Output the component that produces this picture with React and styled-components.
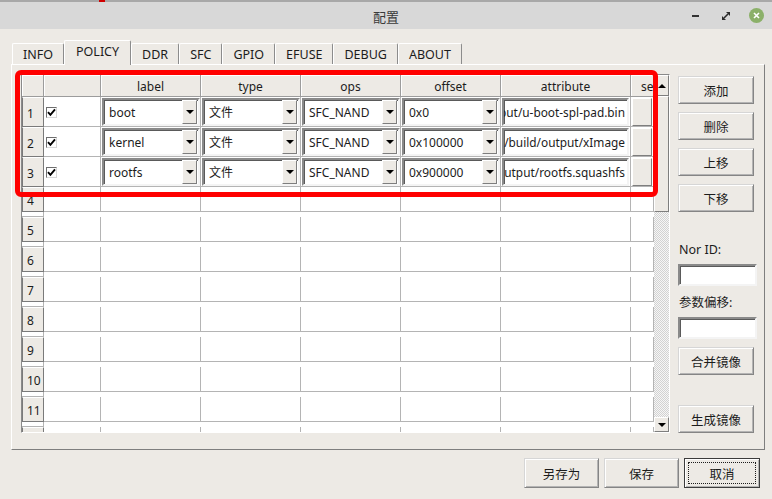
import React from 'react';
import styled, { createGlobalStyle, css } from 'styled-components';

const GlobalStyle = createGlobalStyle`
  html, body { margin: 0; padding: 0; }
  body {
    background: #edeae5;
    font-family: "Noto Sans", "Noto Sans CJK SC", sans-serif;
    font-size: 12px;
    color: #1c1c1c;
  }
  * { box-sizing: border-box; }
`;

const BG = '#edeae5';
const DARK = '#8c8c8c';
const GRID = '#b4b4b4';

const Window = styled.div`
  position: relative;
  width: 772px;
  height: 499px;
  display: flex;
  flex-direction: column;
  background: ${BG};
  overflow: hidden;
`;

const TopStrip = styled.div`
  height: 2px;
  background: linear-gradient(90deg, #a8a8a8 0 99px, #d00000 99px 105px, #a8a8a8 105px 100%);
`;

const TitleBar = styled.div`
  height: 27px;
  background: #d8d8d8;
  display: grid;
  grid-template-columns: 1fr auto 1fr;
  align-items: center;
`;

const Title = styled.div`
  grid-column: 2;
  font-size: 13px;
  color: #3a3a3a;
  padding-top: 1px;
`;

const Controls = styled.div`
  grid-column: 3;
  justify-self: end;
  display: flex;
  align-items: center;
  padding-right: 8px;
`;

const MinIcon = styled.span`
  width: 7px;
  height: 2px;
  background: #333;
  margin-right: 23px;
`;

const RestoreIcon = styled.svg`
  width: 8px;
  height: 8px;
  margin-right: 19px;
`;

const CloseIcon = styled.span`
  width: 15px;
  height: 15px;
  border-radius: 50%;
  background: #8bb069;
  display: flex;
  align-items: center;
  justify-content: center;
`;

const Body = styled.div`
  flex: 1;
  display: flex;
  flex-direction: column;
  padding-top: 11px;
`;

const TabBar = styled.div`
  display: flex;
  align-items: flex-end;
  height: 24px;
  padding-left: 12px;
  position: relative;
  z-index: 2;
`;

const Tab = styled.div`
  height: ${p => (p.$active ? 25 : 21)}px;
  padding: 0 ${p => (p.$active ? 11 : 10)}px;
  margin-bottom: ${p => (p.$active ? -1 : 0)}px;
  display: flex;
  align-items: center;
  justify-content: center;
  background: ${BG};
  border-top: 1px solid #ffffff;
  border-left: 1px solid #ffffff;
  border-right: 1px solid ${DARK};
  border-top-left-radius: 2px;
  border-top-right-radius: 2px;
  font-size: 12.5px;
  color: #1c1c1c;
  ${p => p.$active ? css`padding-bottom: 3px;` : css`padding-top: 1px;`}
`;

const Panel = styled.div`
  margin-left: 11px;
  width: 754px;
  height: 386px;
  border-top: 1px solid #ffffff;
  border-left: 1px solid #ffffff;
  border-right: 1px solid #7e7e7e;
  border-bottom: 1px solid #7e7e7e;
  padding: 9px 0 0 9px;
  display: flex;
  gap: 8px;
`;

const TableFrame = styled.div`
  width: 649px;
  height: 359px;
  border-top: 1px solid #8a8a8a;
  border-left: 1px solid #8a8a8a;
  border-right: 1px solid #ffffff;
  border-bottom: 1px solid #ffffff;
  display: flex;
  background: #ffffff;
`;

const Grid = styled.div`
  width: 632px;
  overflow: hidden;
  display: flex;
  flex-direction: column;
`;

const COLS = '22px 57px 100px 100px 100px 100px 130px 23px';

const Row = styled.div`
  display: grid;
  grid-template-columns: ${COLS};
  height: ${p => (p.$header ? 22 : 30)}px;
  flex-shrink: 0;
`;

const HeadCell = styled.div`
  background: ${BG};
  border-right: 1px solid #9c9c9c;
  border-bottom: 1px solid #9c9c9c;
  box-shadow: inset 1px 1px #ffffff;
  display: flex;
  align-items: center;
  justify-content: ${p => (p.$start ? 'flex-start' : 'center')};
  padding: 2px 0 0 ${p => (p.$start ? 10 : 0)}px;
  white-space: nowrap;
  overflow: hidden;
  color: #1c1c1c;
`;

const RowHead = styled.div`
  background: ${BG};
  border-left: 1px solid #7a7a7a;
  border-right: 1px solid #7a7a7a;
  border-bottom: 1px solid #7a7a7a;
  border-top: 1px solid #ffffff;
  display: flex;
  align-items: center;
  padding-left: 4px;
  padding-top: 2px;
  font-size: 12px;
`;

const Cell = styled.div`
  border-right: 1px solid ${GRID};
  border-bottom: 1px solid ${GRID};
  padding: 1px 0 0 1px;
  display: flex;
  align-items: stretch;
  min-width: 0;
  background: #ffffff;
`;

const CheckCell = styled(Cell)`
  align-items: center;
  padding: 0 0 0 2px;
`;

const CheckBox = styled.span`
  width: 11px;
  height: 11px;
  background: #ffffff;
  border: 1px solid;
  border-color: #6e6e6e #d8d8d8 #d8d8d8 #6e6e6e;
  display: flex;
  align-items: center;
  justify-content: center;
  margin-top: 1px;
`;

const sunken = css`
  border: 2px solid;
  border-color: #8a8a8a #f4f4f4 #f4f4f4 #8a8a8a;
  box-shadow: inset 1px 1px #5a5a5a;
  background: #ffffff;
`;

const Combo = styled.div`
  ${sunken};
  flex: 1;
  display: flex;
  align-items: center;
  min-width: 0;
`;

const ComboText = styled.span`
  flex: 1;
  min-width: 0;
  padding-left: 5px;
  white-space: nowrap;
  overflow: hidden;
  font-size: 12px;
`;

const raised = css`
  background: ${BG};
  border: 1px solid;
  border-color: #ffffff #7e7e7e #7e7e7e #ffffff;
`;

const DropBtn = styled.span`
  ${raised};
  width: 15px;
  flex-shrink: 0;
  align-self: stretch;
  margin: 0 1px 0 0;
  display: flex;
  align-items: center;
  justify-content: center;
`;

const Triangle = styled.span`
  width: 0;
  height: 0;
  border-left: 4px solid transparent;
  border-right: 4px solid transparent;
  border-${p => (p.$up ? 'bottom' : 'top')}: 4px solid #000000;
`;

const Entry = styled.div`
  ${sunken};
  flex: 1;
  display: flex;
  align-items: center;
  justify-content: flex-end;
  overflow: hidden;
  white-space: nowrap;
  padding-right: 2px;
  font-size: 11.85px;
  margin-right: 1px;
`;

const SideCell = styled(Cell)`
  padding: 1px 1px 0 1px;
`;

const SideBox = styled.span`
  ${raised};
  flex: 1;
`;

const Scrollbar = styled.div`
  width: 15px;
  display: flex;
  flex-direction: column;
  background: repeating-conic-gradient(#d2d2d2 0 25%, #f6f6f6 0 50%) 0 0 / 2px 2px;
`;

const ScrollBtn = styled.div`
  ${raised};
  height: ${p => p.$h}px;
  display: flex;
  align-items: center;
  justify-content: center;
  flex-shrink: 0;
`;

const Thumb = styled.div`
  ${raised};
  height: 116px;
  flex-shrink: 0;
`;

const Track = styled.div`
  flex: 1;
`;

const Side = styled.div`
  width: 79px;
  height: 359px;
  display: flex;
  flex-direction: column;
  align-items: flex-start;
`;

const Button = styled.button`
  font-family: inherit;
  font-size: 12.5px;
  color: #1c1c1c;
  width: ${p => p.$w || 76}px;
  height: ${p => p.$h || 28}px;
  margin-top: ${p => (p.$auto ? 'auto' : `${p.$mt || 0}px`)};
  background: ${BG};
  border: 1px solid;
  border-color: #d6d6d6 #858585 #858585 #d6d6d6;
  box-shadow: inset 1px 1px #ffffff, inset -1px -1px #b4b4b4;
  padding: 0;
  display: flex;
  align-items: center;
  justify-content: center;
  flex-shrink: 0;
  ${p => p.$focus && css`
    border-color: #3c3c3c;
    outline: 1px dotted #1c1c1c;
    outline-offset: -5px;
  `}
`;

const Label = styled.div`
  margin-top: ${p => p.$mt}px;
  height: 18px;
  line-height: 18px;
  font-size: 12.5px;
  padding-left: 1px;
`;

const Input = styled.div`
  ${sunken};
  width: 79px;
  height: 22px;
  margin-top: 5px;
`;

const Footer = styled.div`
  display: flex;
  justify-content: flex-end;
  gap: 5px;
  padding: 8px 12px 0 0;
`;

const Highlight = styled.div`
  position: absolute;
  left: 15px;
  top: 70px;
  width: 643px;
  height: 127px;
  border: 5px solid #ff0000;
  border-radius: 6px;
  pointer-events: none;
`;

const CheckMark = () => (
  <svg width="9" height="9" viewBox="0 0 9 9">
    <path d="M1 4.2 L3.4 6.8 L8 1.4" fill="none" stroke="#000" strokeWidth="1.9" />
  </svg>
);

const rows = [
  { label: 'boot', type: '文件', ops: 'SFC_NAND', offset: '0x0', attr: '/home/user/sdk/output/u-boot-spl-pad.bin' },
  { label: 'kernel', type: '文件', ops: 'SFC_NAND', offset: '0x100000', attr: '/home/user/sdk/build/output/xImage' },
  { label: 'rootfs', type: '文件', ops: 'SFC_NAND', offset: '0x900000', attr: '/home/user/sdk/output/rootfs.squashfs' },
];

const tabs = ['INFO', 'POLICY', 'DDR', 'SFC', 'GPIO', 'EFUSE', 'DEBUG', 'ABOUT'];
const headers = ['', '', 'label', 'type', 'ops', 'offset', 'attribute'];

const ComboBox = ({ value }) => (
  <Cell>
    <Combo>
      <ComboText>{value}</ComboText>
      <DropBtn><Triangle /></DropBtn>
    </Combo>
  </Cell>
);

export default function App() {
  const empty = Array.from({ length: 9 }, (_, i) => i + 4);
  return (
    <>
      <GlobalStyle />
      <Window>
        <TopStrip />
        <TitleBar>
          <Title>配置</Title>
          <Controls>
            <MinIcon />
            <RestoreIcon viewBox="0 0 8 8">
              <path d="M4 0 H8 V4 Z M0 4 V8 H4 Z" fill="#2a2a2a" />
              <path d="M2 6 L6 2" stroke="#2a2a2a" strokeWidth="1.6" />
            </RestoreIcon>
            <CloseIcon>
              <svg width="7" height="7" viewBox="0 0 7 7">
                <path d="M1 1 L6 6 M6 1 L1 6" stroke="#fff" strokeWidth="1.6" />
              </svg>
            </CloseIcon>
          </Controls>
        </TitleBar>
        <Body>
          <TabBar>
            {tabs.map(t => (
              <Tab key={t} $active={t === 'POLICY'}>{t}</Tab>
            ))}
          </TabBar>
          <Panel>
            <TableFrame>
              <Grid>
                <Row $header>
                  {headers.map((h, i) => (
                    <HeadCell key={i}>{h}</HeadCell>
                  ))}
                  <HeadCell $start>se</HeadCell>
                </Row>
                {rows.map((r, i) => (
                  <Row key={i}>
                    <RowHead>{i + 1}</RowHead>
                    <CheckCell><CheckBox><CheckMark /></CheckBox></CheckCell>
                    <ComboBox value={r.label} />
                    <ComboBox value={r.type} />
                    <ComboBox value={r.ops} />
                    <ComboBox value={r.offset} />
                    <Cell><Entry>{r.attr}</Entry></Cell>
                    <SideCell><SideBox /></SideCell>
                  </Row>
                ))}
                {empty.map(n => (
                  <Row key={n}>
                    <RowHead>{n}</RowHead>
                    <Cell /><Cell /><Cell /><Cell /><Cell /><Cell /><Cell /><Cell />
                  </Row>
                ))}
              </Grid>
              <Scrollbar>
                <ScrollBtn $h={21}><Triangle $up /></ScrollBtn>
                <Thumb />
                <Track />
                <ScrollBtn $h={15}><Triangle /></ScrollBtn>
              </Scrollbar>
            </TableFrame>
            <Side>
              <Button $mt={2}>添加</Button>
              <Button $mt={8}>删除</Button>
              <Button $mt={8}>上移</Button>
              <Button $mt={8}>下移</Button>
              <Label $mt={29}>Nor ID:</Label>
              <Input />
              <Label $mt={8}>参数偏移:</Label>
              <Input />
              <Button $mt={8}>合并镜像</Button>
              <Button $auto>生成镜像</Button>
            </Side>
          </Panel>
          <Footer>
            <Button $w={75} $h={30}>另存为</Button>
            <Button $w={75} $h={30}>保存</Button>
            <Button $w={76} $h={30} $focus>取消</Button>
          </Footer>
        </Body>
        <Highlight />
      </Window>
    </>
  );
}
